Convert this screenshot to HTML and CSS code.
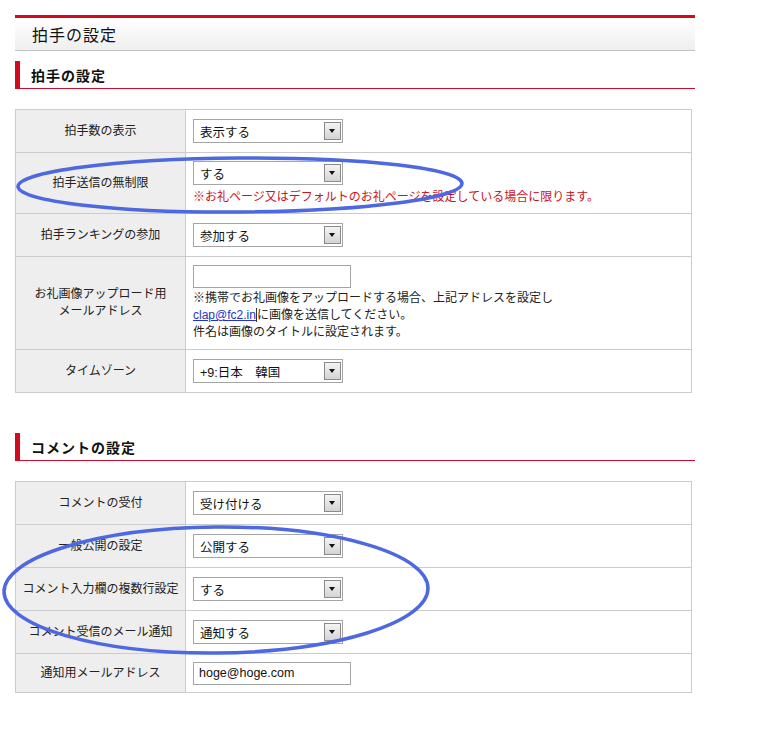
FILE: index.html
```html
<!DOCTYPE html>
<html lang="ja">
<head>
<meta charset="utf-8">
<title>拍手の設定</title>
<link rel="stylesheet" href="styles.css">
</head>
<body>
<div class="page">
  <div class="title-bar"><h1>拍手の設定</h1></div>

  <h2 class="section-head">拍手の設定</h2>
  <div class="form">
    <div class="label h42">拍手数の表示</div>
    <div class="value h42"><div class="select">表示する<span class="arrow"></span></div></div>

    <div class="label h60">拍手送信の無制限</div>
    <div class="value h60 col">
      <div class="select">する<span class="arrow"></span></div>
      <p class="note">※お礼ページ又はデフォルトのお礼ページを設定している場合に限ります。</p>
    </div>

    <div class="label h42">拍手ランキングの参加</div>
    <div class="value h42"><div class="select">参加する<span class="arrow"></span></div></div>

    <div class="label h92">お礼画像アップロード用<br>メールアドレス</div>
    <div class="value h92 col">
      <div class="text-input"></div>
      <p class="help">※携帯でお礼画像をアップロードする場合、上記アドレスを設定し<br><a href="#" class="mail">clap@fc2.in</a>に画像を送信してください。<br>件名は画像のタイトルに設定されます。</p>
    </div>

    <div class="label h42">タイムゾーン</div>
    <div class="value h42"><div class="select">+9:日本　韓国<span class="arrow"></span></div></div>
  </div>

  <h2 class="section-head second">コメントの設定</h2>
  <div class="form">
    <div class="label h42">コメントの受付</div>
    <div class="value h42"><div class="select">受け付ける<span class="arrow"></span></div></div>

    <div class="label h42">一般公開の設定</div>
    <div class="value h42"><div class="select">公開する<span class="arrow"></span></div></div>

    <div class="label h42">コメント入力欄の複数行設定</div>
    <div class="value h42"><div class="select">する<span class="arrow"></span></div></div>

    <div class="label h42">コメント受信のメール通知</div>
    <div class="value h42"><div class="select">通知する<span class="arrow"></span></div></div>

    <div class="label h38">通知用メールアドレス</div>
    <div class="value h38"><div class="text-input">hoge@hoge.com</div></div>
  </div>
</div>

<svg class="marks" width="773" height="729" viewBox="0 0 773 729" aria-hidden="true">
  <ellipse cx="240" cy="185" rx="222" ry="27" transform="rotate(-0.4 240 185)" />
  <ellipse cx="216" cy="590" rx="212" ry="63" transform="rotate(-0.5 216 590)" />
</svg>
</body>
</html>
```

FILE: styles.css
```css
html, body {
  margin: 0;
  padding: 0;
  background: #ffffff;
}

body {
  font-family: "Liberation Sans", "Noto Sans CJK JP", sans-serif;
  font-size: 12px;
  color: #222;
  position: relative;
  width: 773px;
  height: 729px;
  overflow: hidden;
}

.page {
  width: 680px;
  margin-left: 15px;
  padding-top: 15px;
}

.title-bar {
  border-top: 3px solid #d20a1e;
  border-bottom: 1px solid #c4c4c4;
  height: 32px;
  background: linear-gradient(#ffffff, #efefef);
  display: flex;
  align-items: center;
  padding-left: 17px;
}

.title-bar h1 {
  margin: 0;
  font-size: 16px;
  font-weight: normal;
  letter-spacing: 1px;
  color: #111;
}

.section-head {
  margin: 10px 0 0 0;
  height: 27px;
  border-left: 5px solid #d20a1e;
  border-bottom: 1px solid #c8102e;
  padding-left: 11px;
  display: flex;
  align-items: center;
  font-size: 14px;
  font-weight: bold;
  letter-spacing: 1px;
  color: #111;
}

.section-head.second {
  margin-top: 40px;
}

.form {
  margin-top: 20px;
  width: 675px;
  display: grid;
  grid-template-columns: 170px 1fr;
  border: 1px solid #cccccc;
  border-bottom: none;
}

.label {
  background: #eeeeee;
  border-right: 1px solid #cccccc;
  border-bottom: 1px solid #cccccc;
  display: flex;
  align-items: center;
  justify-content: center;
  text-align: center;
  line-height: 17px;
  font-size: 12px;
  color: #222;
}

.value {
  border-bottom: 1px solid #cccccc;
  display: flex;
  align-items: center;
  padding-left: 7px;
}

.value.col {
  flex-direction: column;
  align-items: flex-start;
  justify-content: center;
}

.h42 { height: 42px; }
.h60 { height: 60px; }
.h92 { height: 92px; }
.h38 { height: 38px; }

.select {
  position: relative;
  box-sizing: border-box;
  width: 150px;
  height: 24px;
  border: 1px solid #a5a5a5;
  background: #fff;
  padding-left: 6px;
  display: flex;
  align-items: center;
  font-size: 12.5px;
  color: #111;
}

.arrow {
  position: absolute;
  right: 1px;
  top: 2px;
  box-sizing: border-box;
  width: 17px;
  height: 18px;
  border: 1px solid #8a8a8a;
  background: linear-gradient(#f4f4f4, #d4d4d4);
}

.arrow::after {
  content: "";
  position: absolute;
  left: 4px;
  top: 6px;
  border-left: 3.5px solid transparent;
  border-right: 3.5px solid transparent;
  border-top: 4px solid #111;
}

.note {
  margin: 4px 0 0 0;
  color: #cc1122;
  font-size: 12px;
  line-height: 16px;
}

.text-input {
  box-sizing: border-box;
  width: 158px;
  height: 23px;
  border: 1px solid #a5a5a5;
  background: #fff;
  padding-left: 5px;
  display: flex;
  align-items: center;
  font-size: 12.5px;
  color: #111;
}

.help {
  margin: 2px 0 0 0;
  font-size: 12px;
  line-height: 17px;
  color: #222;
}

.mail {
  color: #2233cc;
  text-decoration: underline;
  border-right: 1px solid #333;
}

.marks {
  position: absolute;
  left: 0;
  top: 0;
  pointer-events: none;
}

.marks ellipse {
  fill: none;
  stroke: #4d68e0;
  stroke-width: 3.5;
}
```
